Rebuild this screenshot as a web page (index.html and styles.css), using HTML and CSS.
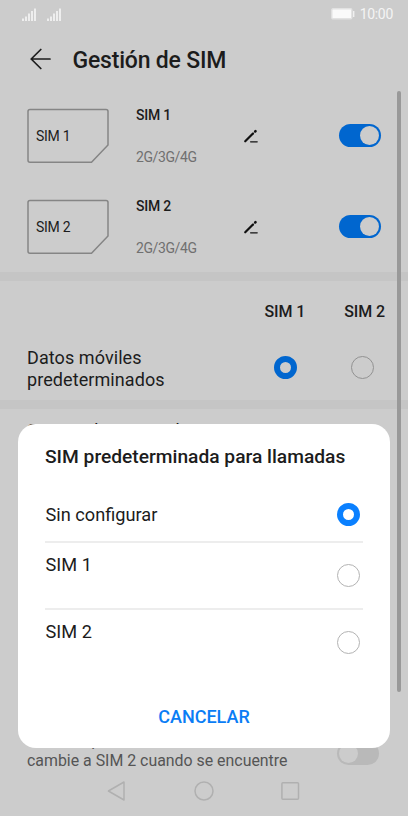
FILE: index.html
```html
<!DOCTYPE html>
<html lang="es">
<head>
    <meta charset="UTF-8">
    <meta name="viewport" content="width=device-width, initial-scale=1.0">
    <title>Gestión de SIM</title>
    <link rel="stylesheet" href="styles.css">
</head>
<body>
    <div class="screen">
        <!-- Status bar -->
        <div class="status-bar">
            <svg class="signal" width="14" height="13" viewBox="0 0 14 13">
                <path d="M1 10.5V13M4 8.5V13M7 5.5V13M10 3V13M13 0.5V13" />
            </svg>
            <svg class="signal" width="14" height="13" viewBox="0 0 14 13">
                <path d="M1 10.5V13M4 8.5V13M7 5.5V13M10 3V13M13 0.5V13" />
            </svg>
            <svg class="battery" width="24" height="12" viewBox="0 0 24 12">
                <rect x="0.8" y="0.8" width="20" height="10" rx="1.2" fill="#fafafa" stroke="#e2e2e2" stroke-width="1.4" />
                <path d="M22.7 3v6" stroke="#f0f0f0" stroke-width="1.4" />
            </svg>
            <span class="clock">10:00</span>
        </div>

        <div class="header">
            <svg width="22" height="22" viewBox="0 0 22 22" fill="none" stroke="#1c1c1c" stroke-width="1.7" stroke-linecap="round" stroke-linejoin="round">
                <path d="M10.8 1.5L1.2 11L10.8 20.5M1.2 11H20" />
            </svg>
            <h1>Gestión de SIM</h1>
        </div>

        <!-- SIM cards -->
        <div class="sim-row">
            <div class="sim-card">
                <svg width="82" height="55" viewBox="0 0 82 55">
                    <path d="M3 1.5H79Q81 1.5 81 3.5V37L64.5 54.2H3Q1 54.2 1 52.2V3.5Q1 1.5 3 1.5Z" />
                </svg>
                <span>SIM 1</span>
            </div>
            <div class="sim-info">
                <strong>SIM 1</strong>
                <span>2G/3G/4G</span>
            </div>
            <svg class="edit" width="16" height="16" viewBox="0 0 16 16">
                <path d="M2.2 13.3L10 5.5" stroke-width="2.2" />
                <path d="M12.2 3.5L12.5 3.2" stroke-width="2.5" />
                <path d="M7.6 13.8H14.2" stroke-width="1.3" />
            </svg>
            <div class="toggle on"></div>
        </div>
        <div class="sim-row">
            <div class="sim-card">
                <svg width="82" height="55" viewBox="0 0 82 55">
                    <path d="M3 1.5H79Q81 1.5 81 3.5V37L64.5 54.2H3Q1 54.2 1 52.2V3.5Q1 1.5 3 1.5Z" />
                </svg>
                <span>SIM 2</span>
            </div>
            <div class="sim-info">
                <strong>SIM 2</strong>
                <span>2G/3G/4G</span>
            </div>
            <svg class="edit" width="16" height="16" viewBox="0 0 16 16">
                <path d="M2.2 13.3L10 5.5" stroke-width="2.2" />
                <path d="M12.2 3.5L12.5 3.2" stroke-width="2.5" />
                <path d="M7.6 13.8H14.2" stroke-width="1.3" />
            </svg>
            <div class="toggle on"></div>
        </div>

        <div class="divider"></div>

        <!-- Mobile data -->
        <div class="defaults">
            <div class="defaults-head">
                <span>SIM 1</span>
                <span>SIM 2</span>
            </div>
            <div class="defaults-row">
                <p>Datos móviles predeterminados</p>
                <span class="radio checked"></span>
                <span class="radio"></span>
            </div>
        </div>

        <div class="divider"></div>

        <div class="calls">
            <p>SIM predeterminada</p>
        </div>

        <div class="switch-row">
            <p>Permite que los datos se<br>cambie a SIM 2 cuando se encuentre</p>
            <div class="toggle"></div>
        </div>

        <!-- Navigation bar -->
        <div class="nav-bar">
            <svg width="20" height="22" viewBox="0 0 20 22"><path d="M17 2V20L1.4 11Z" /></svg>
            <svg width="22" height="22" viewBox="0 0 22 22"><circle cx="11" cy="11" r="9" /></svg>
            <svg width="20" height="22" viewBox="0 0 20 22"><rect x="0.9" y="2.7" width="16.6" height="16.6" rx="1" /></svg>
        </div>

        <div class="scrollbar"></div>

        <!-- Dialog -->
        <div class="dialog">
            <h2>SIM predeterminada para llamadas</h2>
            <div class="option first">
                <span>Sin configurar</span>
                <span class="radio checked"></span>
            </div>
            <div class="option">
                <span>SIM 1</span>
                <span class="radio"></span>
            </div>
            <div class="option">
                <span>SIM 2</span>
                <span class="radio"></span>
            </div>
            <button type="button">CANCELAR</button>
        </div>
    </div>
</body>
</html>
```
FILE: styles.css
```css
* {
    box-sizing: border-box;
}
body {
    margin: 0;
    font-family: Roboto, sans-serif;
    color: #1c1c1c;
}
h1, h2, p {
    margin: 0;
    font-weight: 500;
}
.screen {
    position: relative;
    display: flex;
    flex-direction: column;
    width: 408px;
    height: 816px;
    overflow: hidden;
    background: #ccc;
}
.status-bar {
    display: flex;
    align-items: center;
    gap: 10.5px;
    height: 28px;
    padding: 0 15px 0 22px;
}
.signal {
    fill: none;
    stroke: #f4f4f4;
    stroke-width: 1.7;
}
.battery {
    margin-left: auto;
}
.clock {
    margin-left: -6px;
    font-size: 14px;
    letter-spacing: -0.3px;
    color: #f4f4f4;
}
.header {
    display: flex;
    align-items: center;
    gap: 21px;
    height: 62px;
    padding-left: 29.5px;
}
.header h1 {
    padding-top: 4px;
    font-size: 23px;
    letter-spacing: -0.2px;
    line-height: 30px;
}
.sim-row {
    display: flex;
    align-items: center;
    height: 91px;
    padding: 0 27px;
}
.sim-card {
    display: grid;
    align-items: center;
    width: 82px;
}
.sim-card svg, .sim-card span {
    grid-area: 1 / 1;
}
.sim-card svg {
    fill: none;
    stroke: #858585;
    stroke-width: 1.5;
}
.sim-card span {
    padding-left: 9px;
    font-size: 14px;
    letter-spacing: -0.25px;
}
.sim-info {
    display: flex;
    flex-direction: column;
    gap: 26px;
    width: 107px;
    margin-left: 27px;
    font-size: 14px;
    letter-spacing: -0.2px;
    line-height: 16px;
}
.sim-info strong {
    font-weight: 500;
}
.sim-info span {
    letter-spacing: -0.4px;
    color: #707070;
}
.edit {
    fill: none;
    stroke: #111;
    stroke-linecap: round;
}
.toggle {
    display: flex;
    align-items: center;
    flex: none;
    width: 42px;
    height: 23px;
    margin-left: auto;
    padding: 0 2px;
    border-radius: 12px;
    background: #b9b9b9;
}
.toggle::before {
    content: "";
    width: 19px;
    height: 19px;
    border-radius: 50%;
    background: #ccc;
}
.toggle.on {
    background: #0066cf;
}
.toggle.on::before {
    margin-left: 19px;
}
.divider {
    flex: none;
    height: 9px;
    background: #c5c5c5;
}
.defaults {
    height: 119px;
    padding: 0 23px 0 27px;
}
.defaults-head {
    display: flex;
    justify-content: flex-end;
    gap: 39px;
    padding-top: 21px;
    font-size: 16px;
    font-weight: 500;
    letter-spacing: -0.1px;
    line-height: 20px;
}
.defaults-row {
    display: flex;
    align-items: flex-start;
    padding: 25px 11px 0 0;
}
.defaults-row p {
    width: 160px;
    margin-right: auto;
    font-size: 18px;
    font-weight: 400;
    letter-spacing: 0.08px;
    line-height: 21.5px;
}
.radio {
    flex: none;
    width: 23px;
    height: 23px;
    border: 1px solid #929292;
    border-radius: 50%;
}
.radio.checked {
    border: 6px solid #0066cf;
}
.defaults-row .radio {
    margin-top: 9px;
}
.defaults-row .radio + .radio {
    margin-left: 54px;
}
.calls {
    padding: 11px 27px;
    font-size: 18px;
    line-height: 22px;
}
.calls p {
    font-weight: 400;
}
.switch-row {
    display: flex;
    margin-top: auto;
    padding: 0 29px 9px 27px;
}
.switch-row p {
    font-size: 15.9px;
    font-weight: 400;
    line-height: 20px;
    color: #555;
}
.switch-row .toggle {
    margin-top: 11px;
}
.nav-bar {
    display: flex;
    flex: none;
    justify-content: center;
    gap: 66px;
    height: 36px;
    fill: none;
    stroke: #b0b0b0;
    stroke-width: 1.5;
    stroke-linejoin: round;
}
.scrollbar {
    position: absolute;
    top: 91px;
    right: 7px;
    width: 4px;
    height: 601px;
    border-radius: 2px;
    background: #999;
}
.dialog {
    position: absolute;
    top: 424px;
    left: 18px;
    width: 372px;
    height: 324px;
    padding: 20px 27px 0;
    border-radius: 18px;
    background: #fff;
}
.dialog h2 {
    font-size: 19.2px;
    line-height: 26px;
    white-space: nowrap;
}
.option {
    display: flex;
    justify-content: space-between;
    height: 67px;
    padding: 11px 3px 0 0.5px;
    border-top: 2px solid #ededed;
    font-size: 18.2px;
    line-height: 22px;
}
.option .radio {
    margin-top: 10px;
    border-color: #b3b3b3;
}
.option.first {
    height: 71px;
    padding-top: 34px;
    border-top: 0;
}
.option.first .radio {
    margin-top: -1px;
    border-color: #0a80ff;
}
.dialog button {
    display: block;
    margin: 31px auto 0;
    padding: 0;
    border: 0;
    background: none;
    font-family: inherit;
    font-size: 18px;
    font-weight: 500;
    line-height: 22px;
    color: #0a7df5;
}
```
